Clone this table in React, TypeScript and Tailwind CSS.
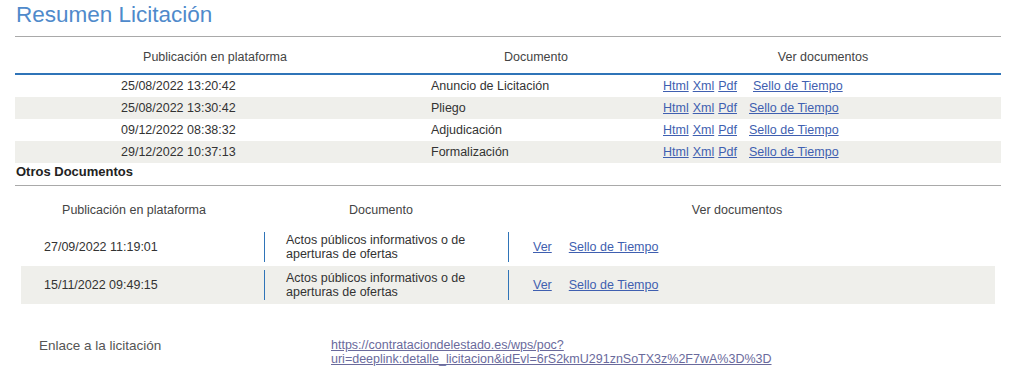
const mainRows = [
  { date: "25/08/2022 13:20:42", doc: "Anuncio de Licitación", extra: true },
  { date: "25/08/2022 13:30:42", doc: "Pliego" },
  { date: "09/12/2022 08:38:32", doc: "Adjudicación" },
  { date: "29/12/2022 10:37:13", doc: "Formalización" },
];

const otherRows = [
  { date: "27/09/2022 11:19:01", doc: ["Actos públicos informativos o de", "aperturas de ofertas"] },
  { date: "15/11/2022 09:49:15", doc: ["Actos públicos informativos o de", "aperturas de ofertas"] },
];

function DocLink({ children, className }: { children: React.ReactNode; className?: string }) {
  return (
    <a href="#" className={"text-[#3f5fb0] underline underline-offset-1 " + (className ?? "")}>
      {children}
    </a>
  );
}

export default function App() {
  return (
    <div className="w-[1024px] bg-white px-[15px] font-['Liberation_Sans',Arial,sans-serif] text-[12.5px] leading-[15px] text-[#333]">
      <h1 className="pl-[1px] pt-[2px] text-[22.5px] leading-[26px] text-[#4f8acb]">Resumen Licitación</h1>

      <div className="mt-[8px] w-[986px] border-t border-[#a9a9a9]" />

      {/* main documents table */}
      <div className="w-[986px]">
        <div className="flex h-[36px] pt-[13px] text-[#444]">
          <div className="w-[400px] text-center">Publicación en plataforma</div>
          <div className="w-[242px] text-center">Documento</div>
          <div className="w-[332px] text-center">Ver documentos</div>
        </div>
        <div className="h-[2px] bg-[#2f74b8]" />
        {mainRows.map((r, i) => (
          <div
            key={r.date}
            className={"grid h-[22px] grid-cols-[416px_232px_1fr] items-center " + (i % 2 ? "bg-[#efefeb]" : "")}
          >
            <div className="pl-[106px]">{r.date}</div>
            <div>{r.doc}</div>
            <div className="flex">
              <DocLink>Html</DocLink>
              <DocLink className="ml-[4px]">Xml</DocLink>
              <DocLink className="ml-[4px]">Pdf</DocLink>
              <DocLink className={r.extra ? "ml-[16px]" : "ml-[12px]"}>Sello de Tiempo</DocLink>
            </div>
          </div>
        ))}
      </div>

      <h2 className="mt-[1px] pl-[1px] text-[13px] font-bold leading-[15px] text-[#222]">Otros Documentos</h2>
      <div className="mt-[6px] w-[986px] border-t border-[#a9a9a9]" />

      {/* other documents table */}
      <div className="ml-[6px] w-[974px]">
        <div className="flex h-[42px] pt-[17px] text-[#444]">
          <div className="w-[226px] text-center">Publicación en plataforma</div>
          <div className="w-[268px] text-center">Documento</div>
          <div className="w-[444px] text-center">Ver documentos</div>
        </div>
        {otherRows.map((r, i) => (
          <div key={r.date} className={"flex h-[38px] items-center " + (i % 2 ? "bg-[#efefeb]" : "")}>
            <div className="w-[243px] pl-[23px]">{r.date}</div>
            <div className="h-[30px] w-px bg-[#2f74b8]" />
            <div className="w-[243px] pl-[21px] leading-[14px]">
              {r.doc[0]}
              <br />
              {r.doc[1]}
            </div>
            <div className="h-[30px] w-px bg-[#2f74b8]" />
            <div className="flex pl-[24px]">
              <DocLink>Ver</DocLink>
              <DocLink className="ml-[17px]">Sello de Tiempo</DocLink>
            </div>
          </div>
        ))}
      </div>

      <div className="mt-[34px] flex items-start">
        <div className="w-[316px] pl-[24px] text-[13.5px] leading-[16px] text-[#555]">Enlace a la licitación</div>
        <a href="#" className="leading-[14px] text-[#6a6a9c] underline underline-offset-1">
          https://contrataciondelestado.es/wps/poc?
          <br />
          uri=deeplink:detalle_licitacion&amp;idEvl=6rS2kmU291znSoTX3z%2F7wA%3D%3D
        </a>
      </div>
    </div>
  );
}
